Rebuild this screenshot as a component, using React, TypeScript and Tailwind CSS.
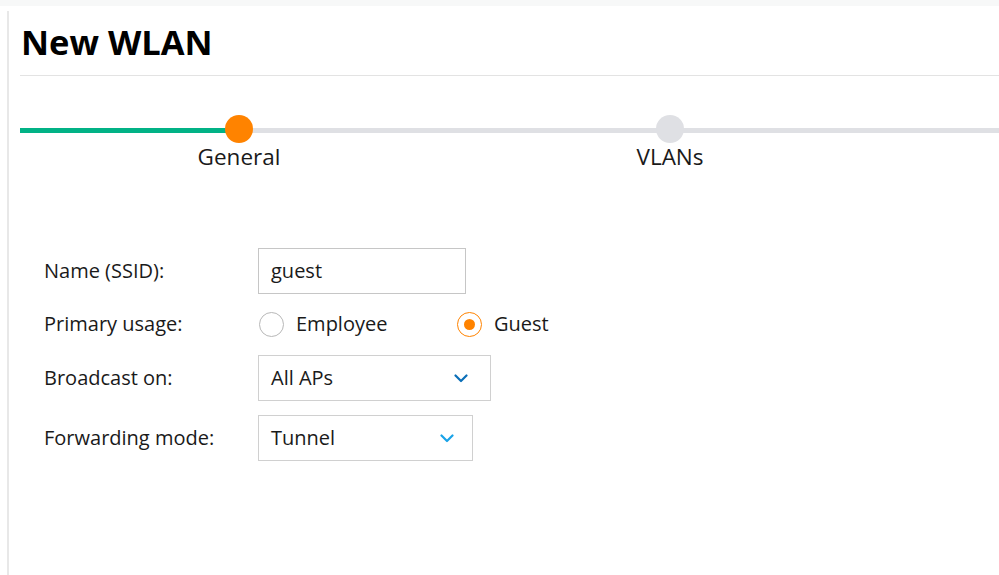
import React from 'react';

const font = { fontFamily: '"Open Sans", "Noto Sans", sans-serif' };

const Chevron = ({ color }: { color: string }) => (
  <svg width="14" height="9" viewBox="0 0 14 9" fill="none">
    <path d="M1.5 1.5L7 7l5.5-5.5" stroke={color} strokeWidth="2.2" strokeLinecap="round" strokeLinejoin="round" />
  </svg>
);

const Radio = ({ checked, label }: { checked?: boolean; label: string }) => (
  <label className="flex items-center gap-[12px]">
    {checked ? (
      <span className="flex h-[25px] w-[25px] items-center justify-center rounded-full border border-[#ff8300]">
        <span className="h-[11px] w-[11px] rounded-full bg-[#ff8300]" />
      </span>
    ) : (
      <span className="h-[25px] w-[25px] rounded-full border border-[#b8b8b8]" />
    )}
    <span>{label}</span>
  </label>
);

const Row = ({ label, children, className }: { label: string; children: React.ReactNode; className?: string }) => (
  <div className={`flex items-center ${className ?? ''}`}>
    <div className="w-[214px] shrink-0">{label}</div>
    {children}
  </div>
);

export default function App() {
  return (
    <div className="h-[575px] w-[999px] overflow-hidden bg-white text-[#1a1a1a]" style={font}>
      <div className="h-[6px] bg-[#f7f8f8]" />
      <div className="ml-[7px] mt-[5px] h-[564px] border-l-2 border-[#e8e8e8] pl-[9px]">
        <h1 className="pl-[3px] pt-[7px] text-[34.5px] font-bold leading-[48px] text-black">New WLAN</h1>
        <div className="ml-[2px] mt-[9px] h-px bg-[#e3e3e3]" />

        {/* stepper */}
        <div className="relative ml-[2px] mt-[39px] h-[70px]">
          <div className="absolute left-0 right-0 top-[13px] h-[5px] bg-[#dfe0e4]" />
          <div className="absolute left-0 top-[13px] h-[5px] w-[216px] bg-[#01b286]" />
          <div className="absolute left-[205px] top-0 flex w-[28px] flex-col items-center">
            <div className="h-[28px] w-[28px] shrink-0 rounded-full bg-[#ff8300]" />
            <div className="-mt-[1px] whitespace-nowrap text-[22.5px] leading-[30px]">General</div>
          </div>
          <div className="absolute left-[636px] top-0 flex w-[28px] flex-col items-center">
            <div className="h-[28px] w-[28px] shrink-0 rounded-full bg-[#dfe0e4]" />
            <div className="-mt-[1px] whitespace-nowrap text-[22.5px] leading-[30px]">VLANs</div>
          </div>
        </div>

        {/* form */}
        <div className="ml-[26px] mt-[63px] flex flex-col text-[20px]">
          <Row label="Name (SSID):">
            <div className="flex h-[46px] w-[208px] items-center border border-[#c6c6c6] px-[12px]">guest</div>
          </Row>
          <Row label="Primary usage:" className="mt-[7px] h-[46px]">
            <div className="flex items-center">
              <div className="w-[199px] pl-[1px]">
                <Radio label="Employee" />
              </div>
              <Radio checked label="Guest" />
            </div>
          </Row>
          <Row label="Broadcast on:" className="mt-[8px]">
            <div className="flex h-[46px] w-[233px] items-center justify-between border border-[#d0d0d0] pl-[12px] pr-[22px]">
              <span>All APs</span>
              <Chevron color="#0b6fb8" />
            </div>
          </Row>
          <Row label="Forwarding mode:" className="mt-[14px]">
            <div className="flex h-[46px] w-[215px] items-center justify-between border border-[#d0d0d0] pl-[12px] pr-[18px]">
              <span>Tunnel</span>
              <Chevron color="#19a3e8" />
            </div>
          </Row>
        </div>
      </div>
    </div>
  );
}
